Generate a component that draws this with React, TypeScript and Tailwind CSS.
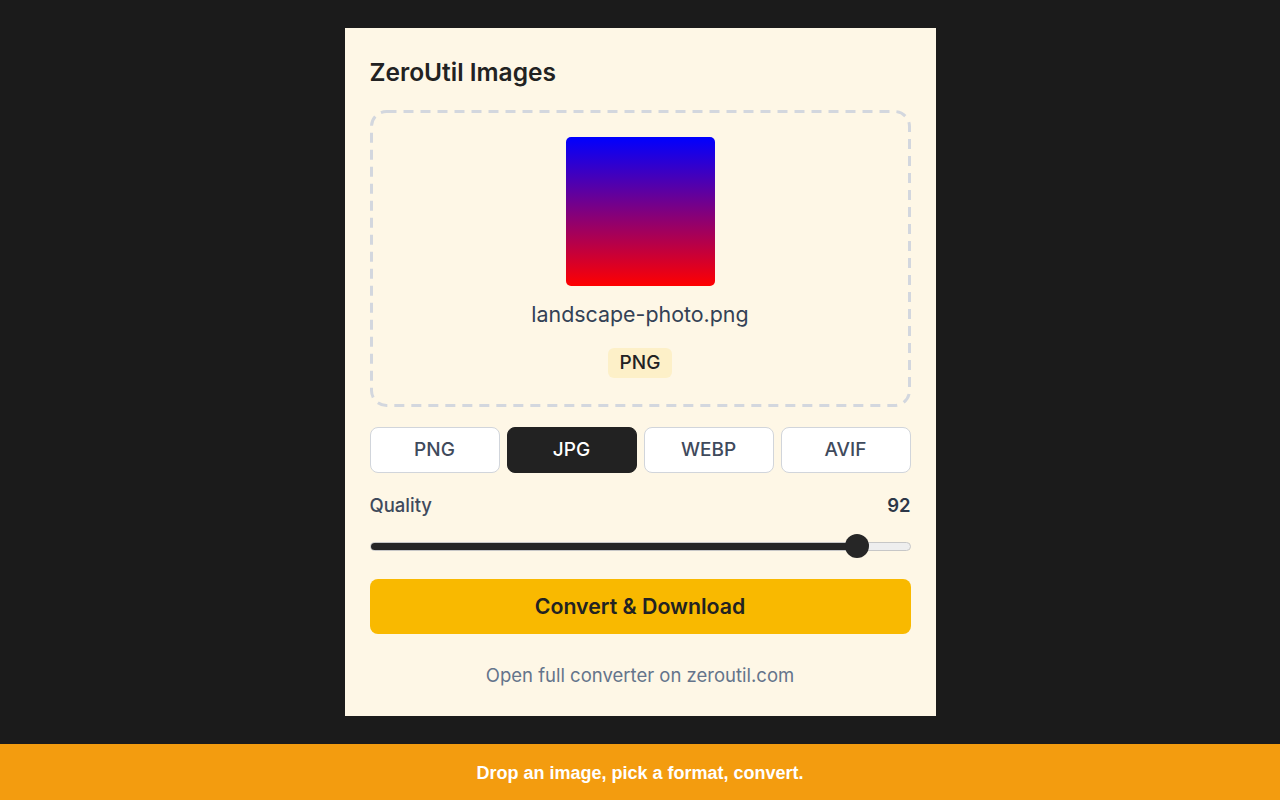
import React from "react";

export default function App() {
  const formats = ["PNG", "JPG", "WEBP", "AVIF"];
  const active = "JPG";
  const pct = 0.92;
  return (
    <div className="w-full min-h-[800px] h-[800px] bg-[#1b1b1b] flex flex-col" style={{ fontFamily: "Inter, 'Noto Sans', sans-serif" }}>
      <div className="flex-1 flex justify-center pt-[28px]">
        <div className="w-[591px] h-[688px] bg-[#fef7e6] px-[25px] pt-[25px] flex flex-col">
          <h1 className="text-[24.5px] leading-[38px] font-semibold text-[#222222]">ZeroUtil Images</h1>
          <div className="relative mt-[19px] h-[297px] rounded-[16px] flex flex-col items-center pt-[27px]">
            <svg className="absolute inset-0 w-full h-full pointer-events-none" width="541" height="297">
              <rect x="1.5" y="1.5" width="538" height="294" rx="15" ry="15" fill="none" stroke="#d3d7de" strokeWidth="3" strokeDasharray="10 7" />
            </svg>
            <div className="w-[149px] h-[149px] rounded-[5px] bg-[linear-gradient(to_bottom,#0000ff,#ff0000)]" />
            <div className="mt-[14px] text-[21.4px] leading-[28px] text-[#334155]">landscape-photo.png</div>
            <div className="mt-[20px] h-[30px] px-[12px] rounded-[6px] bg-[#fdf0c8] text-[19px] leading-[30px] font-medium text-[#222222]">PNG</div>
          </div>
          <div className="mt-[20px] grid grid-cols-4 gap-[7px]">
            {formats.map((f) => (
              <div
                key={f}
                className={
                  f === active
                    ? "h-[46px] rounded-[8px] border-[1.5px] border-[#222222] bg-[#222222] text-white flex items-center justify-center text-[19px] font-medium"
                    : "h-[46px] rounded-[8px] border-[1.5px] border-[#d1d5db] bg-white text-[#3f4a5c] flex items-center justify-center text-[19px] font-medium"
                }
              >
                {f}
              </div>
            ))}
          </div>
          <div className="mt-[20px] flex justify-between items-center text-[18.5px] leading-[24px]">
            <span className="font-medium text-[#3f4a5c]">Quality</span>
            <span className="font-semibold text-[#2d3748]">92</span>
          </div>
          <div className="mt-[17px] relative h-[24px] flex items-center">
            <div className="w-full h-[9px] rounded-full bg-[#eeeeee] border border-[#c7c7c7] overflow-hidden">
              <div className="h-full bg-[#262626]" style={{ width: `${pct * 100}%` }} />
            </div>
            <div className="absolute top-0 w-[24px] h-[24px] rounded-full bg-[#262626]" style={{ left: `calc(${pct} * (100% - 24px))` }} />
          </div>
          <div className="mt-[21px] h-[55px] rounded-[8px] bg-[#f9b900] flex items-center justify-center text-[21.3px] font-semibold text-[#222222]">
            Convert &amp; Download
          </div>
          <div className="mt-[28px] text-center text-[18.5px] leading-[26px] text-[#64748b]">Open full converter on zeroutil.com</div>
        </div>
      </div>
      <div className="h-[56px] bg-[#f39c0f] flex items-center justify-center text-white font-bold text-[18px] pt-[3px]" style={{ fontFamily: "'Liberation Sans', Arial, sans-serif" }}>
        Drop an image, pick a format, convert.
      </div>
    </div>
  );
}
